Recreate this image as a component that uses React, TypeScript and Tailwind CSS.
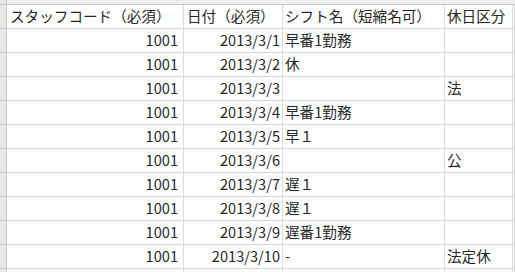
import React from 'react';

type Row = { code: string; date: string; shift: string; holiday: string };

const rows: Row[] = [
  { code: '1001', date: '2013/3/1', shift: '早番1勤務', holiday: '' },
  { code: '1001', date: '2013/3/2', shift: '休', holiday: '' },
  { code: '1001', date: '2013/3/3', shift: '', holiday: '法' },
  { code: '1001', date: '2013/3/4', shift: '早番1勤務', holiday: '' },
  { code: '1001', date: '2013/3/5', shift: '早１', holiday: '' },
  { code: '1001', date: '2013/3/6', shift: '', holiday: '公' },
  { code: '1001', date: '2013/3/7', shift: '遅１', holiday: '' },
  { code: '1001', date: '2013/3/8', shift: '遅１', holiday: '' },
  { code: '1001', date: '2013/3/9', shift: '遅番1勤務', holiday: '' },
  { code: '1001', date: '2013/3/10', shift: '-', holiday: '法定休' },
];

const font = {
  fontFamily: '"Noto Sans CJK JP", "Noto Sans", sans-serif',
};

function Line({ a, b, c, d, head }: { a: string; b: string; c: string; d: string; head?: boolean }) {
  const cell = 'h-[24px] shrink-0 border-r border-b border-[#dadada] flex items-center whitespace-nowrap overflow-hidden';
  return (
    <div className="flex">
      <div className="w-[7px] h-[24px] shrink-0 bg-[#e9e9e9] border-r border-b border-[#c6c6c6]" />
      <div className={`${cell} w-[177px] px-[3px] ${head ? 'justify-start' : 'justify-end pr-[5px]'}`}>{a}</div>
      <div className={`${cell} w-[99px] px-[3px] ${head ? 'justify-start' : 'justify-end pr-[2px]'}`}>{b}</div>
      <div className={`${cell} w-[162px] px-[2px]`}>{c}</div>
      <div className={`${cell} w-[68px] px-[2px]`}>{d}</div>
      <div className={`${cell} flex-1`} />
    </div>
  );
}

export default function App() {
  return (
    <div className="w-[515px] h-[272px] overflow-hidden bg-white text-[#262626] text-[14.6px] leading-none" style={font}>
      {/* column header strip, cut off */}
      <div className="flex h-[5px]">
        <div className="w-[7px] shrink-0 bg-[#e9e9e9] border-r border-b border-[#c6c6c6]" />
        <div className="flex-1 bg-[#efefef] border-b border-[#c6c6c6]" />
      </div>
      <Line a="スタッフコード（必須）" b="日付（必須）" c="シフト名（短縮名可）" d="休日区分" head />
      {rows.map((r, i) => (
        <Line key={i} a={r.code} b={r.date} c={r.shift} d={r.holiday} />
      ))}
      <Line a="" b="" c="" d="" />
    </div>
  );
}
